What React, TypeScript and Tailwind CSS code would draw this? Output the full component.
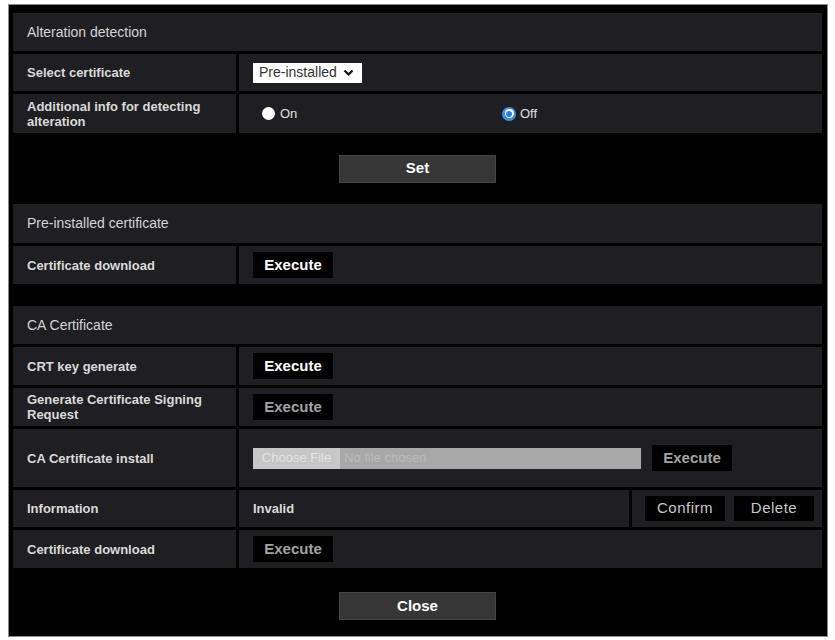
import type { ReactNode } from 'react'

const font = { fontFamily: '"Liberation Sans", Arial, sans-serif' }

function Header({ title, h = 'h-[38px]' }: { title: string; h?: string }) {
  return (
    <div className={`${h} bg-[#1f1f23] flex items-center pl-[14px] text-[14px] text-[#d4d4d4]`}>
      {title}
    </div>
  )
}

function Row({ label, children, h = 'h-[38px]' }: { label: ReactNode; children?: ReactNode; h?: string }) {
  return (
    <div className={`${h} grid grid-cols-[223px_1fr] gap-x-[3px]`}>
      <div className="bg-[#1f1f23] flex items-center pl-[14px] pr-2 text-[13px] font-bold leading-[15px] text-[#dadada]">
        {label}
      </div>
      <div className="bg-[#1f1f23] flex items-center pl-[14px]">{children}</div>
    </div>
  )
}

function ExecBtn({ disabled = false, label = 'Execute' }: { disabled?: boolean; label?: string }) {
  return (
    <button
      className={`w-[80px] h-[26px] bg-black text-[15px] font-bold ${disabled ? 'text-[#a3a3a3]' : 'text-white'}`}
    >
      {label}
    </button>
  )
}

function WideBtn({ label }: { label: string }) {
  return (
    <button className="w-[157px] h-[28px] bg-[#363636] border border-[#444] text-[15px] font-bold text-white">
      {label}
    </button>
  )
}

export default function App() {
  return (
    <div className="min-h-screen bg-white pl-2 pt-1" style={font}>
      <div className="w-[820px] h-[633px] bg-black border border-[#8a8a8a] pt-2 pl-1 pr-[5px]">
        {/* Alteration detection */}
        <div className="flex flex-col gap-[3px]">
          <Header title="Alteration detection" />
          <Row label="Select certificate" h="h-[37px]">
            <div className="w-[109px] h-[20px] bg-white flex items-center pl-[6px] gap-[6px] text-[14px] text-[#333]">
              <span>Pre-installed</span>
              <svg width="11" height="8" viewBox="0 0 11 8">
                <path d="M1.5 1.5 L5.5 5.5 L9.5 1.5" stroke="#111" strokeWidth="2.2" fill="none" />
              </svg>
            </div>
          </Row>
          <Row label="Additional info for detecting alteration" h="h-[39px]">
            <div className="flex items-center w-[249px] pl-[9px] gap-[5px] text-[13px] text-[#e0e0e0]">
              <span className="w-[13px] h-[13px] rounded-full bg-white" />
              <span>On</span>
            </div>
            <div className="flex items-center gap-[4px] text-[13px] text-[#e0e0e0]">
              <span className="w-[14px] h-[14px] rounded-full bg-[#3d8ee6] flex items-center justify-center">
                <span className="w-[9px] h-[9px] rounded-full bg-white flex items-center justify-center">
                  <span className="w-[6px] h-[6px] rounded-full bg-[#2f7fdc]" />
                </span>
              </span>
              <span>Off</span>
            </div>
          </Row>
        </div>
        <div className="h-[71px] flex items-center justify-center">
          <WideBtn label="Set" />
        </div>

        {/* Pre-installed certificate */}
        <div className="flex flex-col gap-[3px]">
          <Header title="Pre-installed certificate" h="h-[39px]" />
          <Row label="Certificate download">
            <ExecBtn />
          </Row>
        </div>
        <div className="h-[22px]" />

        {/* CA Certificate */}
        <div className="flex flex-col gap-[3px]">
          <Header title="CA Certificate" />
          <Row label="CRT key generate">
            <ExecBtn />
          </Row>
          <Row label="Generate Certificate Signing Request">
            <ExecBtn disabled />
          </Row>
          <Row label="CA Certificate install" h="h-[58px]">
            <div className="w-[388px] h-[21px] flex text-[13px]">
              <div className="w-[87px] bg-[#c7c7c7] text-[#e2e2e2] flex items-center justify-center">Choose File</div>
              <div className="flex-1 bg-[#a8a8a8] text-[#bababa] flex items-center pl-[4px]">No file chosen</div>
            </div>
            <div className="ml-[11px]">
              <ExecBtn disabled />
            </div>
          </Row>
          <div className="h-[37px] grid grid-cols-[223px_1fr_190px] gap-x-[3px]">
            <div className="bg-[#1f1f23] flex items-center pl-[14px] text-[13px] font-bold text-[#dadada]">
              Information
            </div>
            <div className="bg-[#1f1f23] flex items-center pl-[14px] text-[13px] font-bold text-[#dadada]">
              Invalid
            </div>
            <div className="bg-[#1f1f23] flex items-center pl-[13px] gap-[9px]">
              <button className="w-[80px] h-[25px] bg-black text-[15px] tracking-[0.5px] text-[#c9c9c9]">
                Confirm
              </button>
              <button className="w-[80px] h-[25px] bg-black text-[15px] tracking-[0.5px] text-[#c9c9c9]">
                Delete
              </button>
            </div>
          </div>
          <Row label="Certificate download">
            <ExecBtn disabled />
          </Row>
        </div>
        <div className="flex justify-center pt-[24px]">
          <WideBtn label="Close" />
        </div>
      </div>
    </div>
  )
}
